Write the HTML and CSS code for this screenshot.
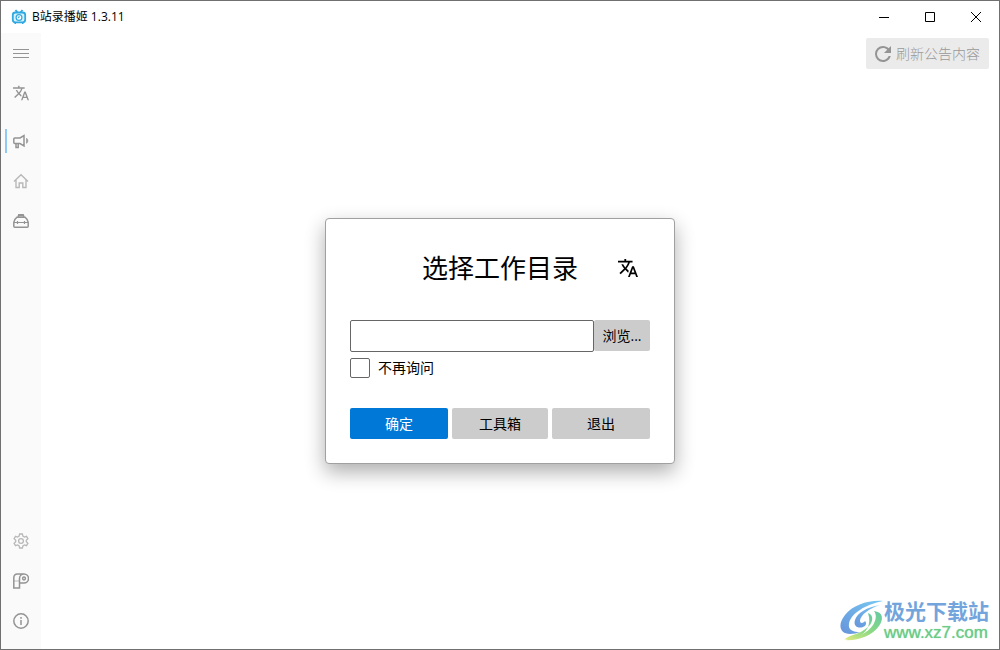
FILE: index.html
```html
<!DOCTYPE html>
<html lang="zh-CN">
<head>
  <meta charset="UTF-8" />
  <meta name="viewport" content="width=device-width, initial-scale=1.0"/>
  <title>B站录播姬 1.3.11</title>
  <link rel="stylesheet" href="styles.css">
</head>
<body>
  <svg class="sprite" aria-hidden="true">
    <symbol id="translate" viewBox="1 1 22 22">
      <path d="M12.87,15.07L10.33,12.56L10.36,12.53C12.1,10.59 13.34,8.36 14.07,6H17V4H10V2H8V4H1V6H12.17C11.5,7.92 10.44,9.75 9,11.35C8.07,10.32 7.3,9.19 6.69,8H4.69C5.42,9.63 6.42,11.17 7.67,12.56L2.58,17.58L4,19L9,14L12.11,17.11L12.87,15.07M18.5,10H16.5L12,22H14L15.12,19H19.87L21,22H23L18.5,10M15.88,17L17.5,12.67L19.12,17H15.88Z"/>
    </symbol>
  </svg>

  <div class="window">
    <header class="titlebar">
      <svg class="app-icon" viewBox="0 0 16 16">
        <path d="M4.5 1l2 2.500M11.500 1l-2 2.500" stroke-width="1.800"/>
        <rect x="1.800" y="3.500" width="12.400" height="9.800" rx="2.500" fill="#d9f1fb" stroke-width="1.800"/>
        <circle cx="8" cy="8.500" r="2.900" fill="#fff" stroke-width="1.200"/>
        <path d="M8 7v1.700h-1.200" stroke-width="1"/>
        <path d="M3.500 14.300h1.500M11 14.300h1.500" stroke-width="1.400"/>
      </svg>
      <h1>B站录播姬 1.3.11</h1>
      <div class="window-buttons">
        <button type="button" aria-label="最小化"><svg viewBox="0 0 10 10"><path d="M0 5.5h10"/></svg></button>
        <button type="button" aria-label="最大化"><svg viewBox="0 0 10 10"><path d="M.5 .5h9v9h-9z"/></svg></button>
        <button type="button" aria-label="关闭"><svg viewBox="0 0 10 10"><path d="M0 0l10 10M10 0L0 10"/></svg></button>
      </div>
    </header>

    <div class="body">
      <nav class="sidebar">
        <button type="button" aria-label="菜单">
          <svg class="line" viewBox="0 0 16 16"><path d="M0 4.500h16M0 8.500h16M0 12.500h16"/></svg>
        </button>
        <button type="button" aria-label="语言">
          <svg><use href="#translate"/></svg>
        </button>
        <a class="active first" href="#news" aria-label="公告">
          <svg class="line bold" viewBox="0 0 16 16"><path d="M1.800 5H7l4-2.500v10.500L7 10.500H1.800a1 1 0 0 1-1-1V6a1 1 0 0 1 1-1z"/><path d="M3 10.500v4h2.200v-4"/><path d="M13.500 5.200c1.800 1 1.800 4.200 0 5.200z" fill="currentColor" stroke-width=".6"/></svg>
        </a>
        <a class="light" href="#home" aria-label="主页">
          <svg class="line" viewBox="0 0 16 16"><path d="M1 8.500L8 1.800l7 6.700M3 7v7.500h3.200V10h3.600v4.500H13V7" stroke-width="1.400"/></svg>
        </a>
        <a href="#toolbox" aria-label="工具箱">
          <svg class="line bold" viewBox="0 0 16 16"><path d="M5 4l.8-2.200h4.400L11 4"/><path d="M5.500 2.500h5" stroke-width="2"/><path d="M3.800 4.300h8.400c1.500 1 2.500 2.700 3 5v4a1 1 0 0 1-1 1H1.800a1 1 0 0 1-1-1v-4c.5-2.300 1.500-4 3-5z"/><path d="M1 9.500h14M4.500 8v3M11.500 8v3" stroke-width="1.200"/></svg>
        </a>
        <a class="light bottom" href="#settings" aria-label="设置">
          <svg class="line" viewBox="0 0 16 16"><path d="M6.600 1h2.800l.5 2.100 1.500.9 2.100-.7 1.400 2.400L13.300 7.200v1.600l1.600 1.500-1.400 2.400-2.100-.7-1.500.9-.5 2.100H6.600l-.5-2.100-1.500-.9-2.100.7-1.400-2.400 1.600-1.500V7.200L1.100 5.700l1.400-2.400 2.100.7 1.500-.9z" stroke-width="1.300"/><circle cx="8" cy="8" r="2.400" stroke-width="1.300"/></svg>
        </a>
        <a href="#log" aria-label="日志">
          <svg class="line bold" viewBox="0 0 16 16"><path d="M11 1H4.500C2 1 .8 3 .8 5v10h5.700V5.500C6.500 3 8.500 1 11 1a4.300 4.300 0 0 1 0 9H6.500"/><circle cx="11" cy="5.500" r="1.400"/><path d="M1 8h5.500" stroke-width=".6"/></svg>
        </a>
        <a href="#about" aria-label="关于">
          <svg class="line bold" viewBox="0 0 16 16"><circle cx="8" cy="8" r="7.200"/><path d="M8 7v5M8 4v1.700"/></svg>
        </a>
      </nav>

      <main class="content">
        <button class="refresh" type="button" disabled>
          <svg viewBox="4 4 16 16"><path d="M17.65,6.35C16.2,4.9 14.21,4 12,4A8,8 0 0,0 4,12A8,8 0 0,0 12,20C15.73,20 18.84,17.45 19.73,14H17.65C16.83,16.33 14.61,18 12,18A6,6 0 0,1 6,12A6,6 0 0,1 12,6C13.66,6 15.14,6.69 16.22,7.78L13,11H20V4L17.65,6.35Z"/></svg>
          <span>刷新公告内容</span>
        </button>
      </main>

      <div class="overlay">
        <form class="dialog" role="dialog" aria-labelledby="dialogTitle">
          <div class="dialog-head">
            <h2 id="dialogTitle">选择工作目录</h2>
            <button class="lang" type="button" aria-label="语言"><svg><use href="#translate"/></svg></button>
          </div>
          <div class="path-row">
            <input type="text" id="path" aria-label="工作目录" />
            <button class="btn" type="button">浏览...</button>
          </div>
          <label class="check" for="skip"><input type="checkbox" id="skip" /><span>不再询问</span></label>
          <div class="actions">
            <button class="btn primary" type="submit">确定</button>
            <button class="btn" type="button">工具箱</button>
            <button class="btn" type="button">退出</button>
          </div>
        </form>
      </div>

      <div class="watermark">
        <svg viewBox="0 0 44 42">
          <defs>
            <linearGradient id="blue" x1="0" y1="1" x2="1" y2="0">
              <stop offset="0" stop-color="#6794db"/>
              <stop offset="1" stop-color="#76c8f2"/>
            </linearGradient>
            <linearGradient id="green" x1="0" y1="1" x2="1" y2="0">
              <stop offset="0" stop-color="#e2ea80"/>
              <stop offset=".5" stop-color="#8ad983"/>
              <stop offset="1" stop-color="#62c9a4"/>
            </linearGradient>
          </defs>
          <path fill="url(#blue)" d="M43 1C28 0 13 5 5 15c-8 10-5 19 5 19 4 0 7-1 10-2-7 0-12-2-11-8C10 14 26 4 43 1z"/>
          <path fill="url(#blue)" d="M40 5C27 7 17 13 15 20c-2 6 3 9 8 7 3-1 4-4 2-6-1 2-5 3-5 0 0-6 10-13 20-16z"/>
          <path fill="url(#green)" d="M34 11c9 1 10 8 5 15C32 36 18 41 4 40c12-2 24-7 29-15 3-5 4-10 1-14z"/>
          <path fill="url(#green)" d="M28 13c6 2 5 9 1 13-4 4-9 7-16 9-3 1-6 2-8 4 4 1 9 0 13-2 8-4 14-12 10-24z"/>
        </svg>
        <p><span class="site-name">极光下载站</span><span class="site-url">www.xz7.com</span></p>
      </div>
    </div>
  </div>
</body>
</html>
```
FILE: styles.css
```css
* {
  box-sizing: border-box;
}

body {
  margin: 0;
  font-family: "Open Sans", "Noto Sans CJK SC", sans-serif;
  font-size: 14px;
  color: #000;
  background-color: #fff;
}

h1, h2, p {
  margin: 0;
  font-weight: normal;
}

button, input {
  font: inherit;
  color: inherit;
  margin: 0;
}

button {
  border: none;
  padding: 0;
  background: none;
}

.sprite {
  display: none;
}

.window {
  display: flex;
  flex-direction: column;
  min-height: 100vh;
  border: 1px solid #707070;
}

/* title bar */
.titlebar {
  display: flex;
  align-items: center;
  height: 32px;
  padding-left: 10px;
}

.titlebar h1 {
  font-size: 12px;
  margin-left: 5px;
  padding-bottom: 2px;
}

.app-icon {
  width: 16px;
  height: 16px;
  fill: none;
  stroke: #2fa9e0;
}

.window-buttons {
  display: flex;
  margin-left: auto;
}

.window-buttons button {
  width: 46px;
  height: 32px;
  display: grid;
  place-items: center;
}

.window-buttons svg {
  width: 10px;
  height: 10px;
  fill: none;
  stroke: #000;
}

.body {
  position: relative;
  display: flex;
  flex: 1;
}

/* sidebar */
.sidebar {
  display: flex;
  flex-direction: column;
  width: 40px;
  padding-bottom: 8px;
  background-color: #fafafa;
}

.sidebar a,
.sidebar button {
  display: grid;
  place-items: center;
  height: 40px;
  color: #949494;
}

.sidebar .light {
  color: #b8b8b8;
}

.sidebar .first {
  margin-top: 8px;
}

.sidebar .bottom {
  margin-top: auto;
}

.sidebar .active {
  position: relative;
}

.sidebar .active::before {
  content: "";
  position: absolute;
  left: 4px;
  top: 8px;
  width: 2px;
  height: 24px;
  background-color: #90c8f6;
}

.sidebar svg {
  width: 16px;
  height: 16px;
  fill: currentColor;
}

.sidebar .line {
  fill: none;
  stroke: currentColor;
}

.sidebar .bold {
  stroke-width: 1.5;
}

/* page */
.content {
  display: flex;
  flex: 1;
  justify-content: flex-end;
  align-items: flex-start;
  padding: 5px 10px;
}

.refresh {
  display: flex;
  align-items: center;
  gap: 5px;
  height: 31px;
  padding: 0 9px;
  border-radius: 2px;
  background-color: #ebebeb;
  color: #999;
}

.refresh svg {
  width: 16px;
  height: 16px;
  fill: #949494;
}

.refresh span,
.check span {
  padding-bottom: 2px;
}

.refresh span {
  font-weight: 300;
}

/* dialog */
.overlay {
  position: absolute;
  inset: 0;
  display: grid;
  place-items: center;
}

.dialog {
  width: 350px;
  padding: 24px;
  border: 1px solid #a0a0a0;
  border-radius: 4px;
  background-color: #fff;
  box-shadow: 0 8px 20px rgba(0,0,0,0.32);
}

.dialog-head {
  display: grid;
  grid-template-columns: 1fr auto 1fr;
  align-items: center;
  height: 50px;
  margin-bottom: 27px;
}

.dialog-head h2 {
  grid-column: 2;
  font-size: 26px;
  line-height: 36px;
}

.lang {
  display: grid;
  place-items: center;
  justify-self: end;
  width: 44px;
  height: 32px;
}

.lang svg {
  width: 20px;
  height: 20px;
}

.path-row {
  display: flex;
  align-items: flex-start;
}

.path-row input {
  flex: 1;
  min-width: 0;
  height: 32px;
  padding: 0 8px;
  border: 1px solid #666;
  border-radius: 2px;
  background-color: #fff;
}

.path-row .btn {
  width: 56px;
}

.btn {
  height: 31px;
  padding-bottom: 2px;
  border-radius: 2px;
  background-color: #ccc;
}

.btn.primary {
  background-color: #0078d7;
  color: #fff;
}

.check {
  display: flex;
  align-items: center;
  gap: 8px;
  height: 20px;
  margin-top: 6px;
}

.check input {
  appearance: none;
  width: 20px;
  height: 20px;
  border: 1px solid #666;
  border-radius: 2px;
}

.check input:checked {
  background-color: #0078d7;
}

.actions {
  display: grid;
  grid-template-columns: 98fr 96fr 98fr;
  gap: 4px;
  margin-top: 30px;
}

/* watermark */
.watermark {
  position: absolute;
  right: 10px;
  bottom: 6px;
  display: flex;
  align-items: center;
}

.watermark svg {
  width: 44px;
  height: 42px;
}

.watermark span {
  display: block;
  white-space: nowrap;
}

.site-name {
  font-size: 21px;
  line-height: 24px;
  font-weight: bold;
  color: #73a5dc;
}

.site-url {
  font-family: "Liberation Sans", sans-serif;
  font-size: 17px;
  line-height: 20px;
  color: #6ccb86;
  text-shadow: 0 0 1px #7ccf92;
}
```
